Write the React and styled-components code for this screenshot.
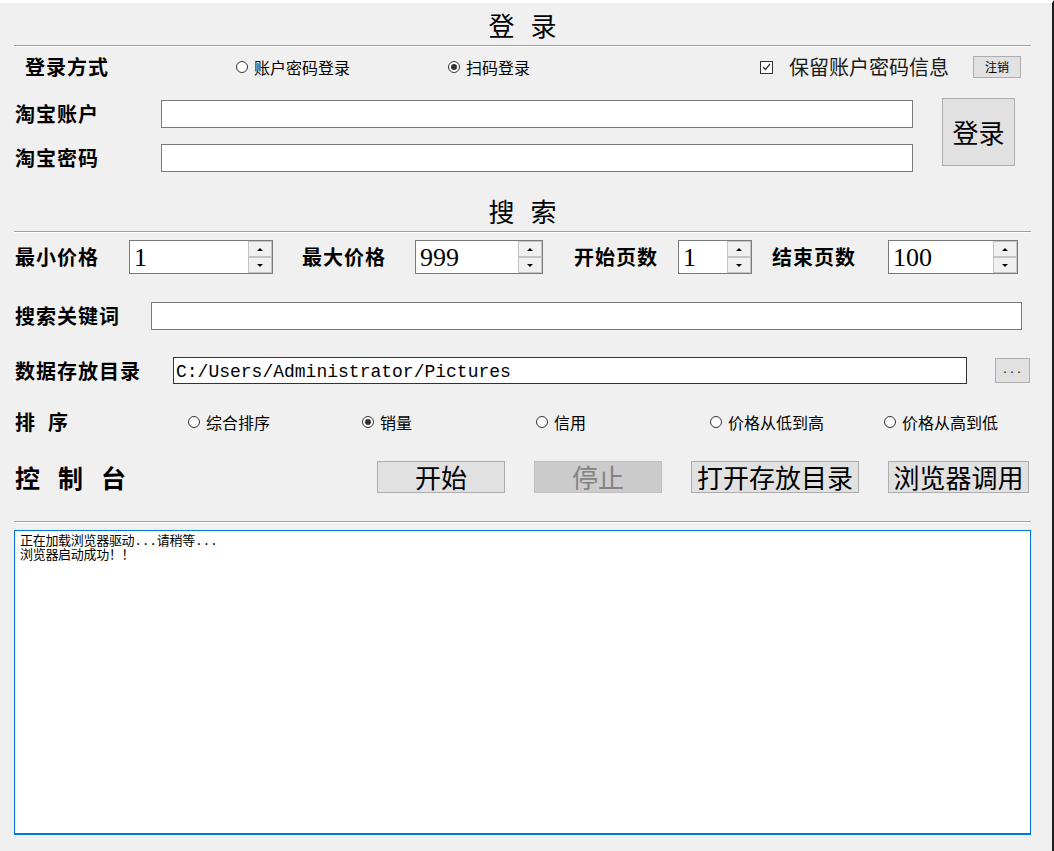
import React from 'react';
import styled, { createGlobalStyle } from 'styled-components';

const GlobalStyle = createGlobalStyle`
  html, body {
    margin: 0;
    padding: 0;
    background: #f0f0f0;
  }
  body {
    font-family: "Noto Sans CJK SC", "Liberation Sans", sans-serif;
    color: #000;
  }
`;

const Window = styled.div`
  width: 1054px;
  height: 851px;
  box-sizing: border-box;
  border-top: 3px solid #fff;
  border-right: 2px solid #1e1e1e;
  background: #f0f0f0;
  padding: 0 21px 0 14px;
  display: flex;
  flex-direction: column;
  overflow: hidden;
`;

const Title = styled.h2`
  margin: ${p => p.$top || 0}px 0 0;
  height: 42px;
  box-sizing: border-box;
  padding: 2px 0 0 16px;
  display: flex;
  align-items: center;
  justify-content: center;
  font-size: 26px;
  font-weight: 400;
  letter-spacing: 16px;
  line-height: 1;
`;

const Divider = styled.div`
  margin-top: ${p => p.$top || 0}px;
  border-top: 1px solid #a0a0a0;
  border-bottom: 1px solid #fff;
`;

const Label = styled.div`
  width: ${p => (p.$w ? `${p.$w}px` : 'auto')};
  flex: none;
  font-size: ${p => p.$fs || 20}px;
  font-weight: 700;
  letter-spacing: ${p => p.$ls ?? 1}px;
  line-height: 1;
  white-space: nowrap;
  padding-left: ${p => p.$pl ?? 1}px;
  box-sizing: border-box;
`;

// 登录方式 行
const ModeRow = styled.div`
  display: grid;
  grid-template-columns: 222px 212px 312px 213px 48px;
  align-items: center;
  height: 40px;
`;

const Option = styled.label`
  display: inline-flex;
  align-items: center;
  gap: 6px;
  font-size: 16px;
  line-height: 1;
  white-space: nowrap;
`;

const Dot = styled.span`
  width: 12px;
  height: 12px;
  box-sizing: border-box;
  border: 1px solid #333;
  border-radius: 50%;
  background: #fff;
  display: grid;
  place-items: center;
  &::after {
    content: '';
    width: 6px;
    height: 6px;
    border-radius: 50%;
    background: ${p => (p.$on ? '#333' : 'transparent')};
  }
`;

const CheckWrap = styled.label`
  display: inline-flex;
  align-items: center;
  gap: 16px;
  font-size: 20px;
  color: #1a1a1a;
  line-height: 1;
  white-space: nowrap;
`;

const Box = styled.span`
  width: 13px;
  height: 13px;
  box-sizing: border-box;
  border: 1px solid #333;
  background: #fff;
  display: grid;
  place-items: center;
`;

const Button = styled.button`
  width: ${p => p.$w}px;
  height: ${p => p.$h}px;
  margin-left: ${p => p.$ml || 0}px;
  flex: none;
  box-sizing: border-box;
  padding: 0;
  border: 1px solid ${p => (p.disabled ? '#bfbfbf' : '#adadad')};
  background: ${p => (p.disabled ? '#cccccc' : '#e1e1e1')};
  color: ${p => (p.disabled ? '#838383' : '#000')};
  font-family: ${p => p.$mono ? '"Liberation Mono", monospace' : '"Noto Sans CJK SC", sans-serif'};
  font-size: ${p => p.$fs}px;
  letter-spacing: ${p => p.$ls || 0}px;
  line-height: 1;
  white-space: nowrap;
  display: flex;
  align-items: center;
  justify-content: center;
`;

// 淘宝账户 / 密码
const LoginBlock = styled.div`
  display: flex;
  margin-top: 11px;
`;

const FieldCol = styled.div`
  display: flex;
  flex-direction: column;
  gap: 16px;
  padding-top: 2px;
`;

const FieldRow = styled.div`
  display: grid;
  grid-template-columns: ${p => p.$cols};
  align-items: center;
  margin-top: ${p => p.$top || 0}px;
`;

const TextBox = styled.div`
  height: ${p => p.$h || 28}px;
  box-sizing: border-box;
  border: 1px solid ${p => p.$dark ? '#333' : '#7a7a7a'};
  background: #fff;
  font-family: "Liberation Mono", monospace;
  font-size: 18px;
  line-height: ${p => (p.$h || 28) - 2}px;
  padding: 2px 0 0 2px;
  white-space: nowrap;
  overflow: hidden;
`;

// 价格 / 页数
const SpinRow = styled.div`
  display: flex;
  align-items: center;
  margin-top: 7px;
  height: 34px;
`;

const SpinBox = styled.div`
  width: ${p => p.$w}px;
  margin-right: ${p => p.$mr || 0}px;
  flex: none;
  height: 34px;
  box-sizing: border-box;
  border: 1px solid #7a7a7a;
  background: #fff;
  display: flex;
`;

const SpinValue = styled.div`
  flex: 1;
  padding-left: 4px;
  font-family: "Liberation Serif", serif;
  font-size: 26px;
  line-height: 33px;
`;

const SpinButtons = styled.div`
  width: 24px;
  display: flex;
  flex-direction: column;
`;

const SpinBtn = styled.div`
  flex: 1;
  box-sizing: border-box;
  border: 1px solid #c4c4c4;
  background: #f0f0f0;
  display: grid;
  place-items: center;
  &::after {
    content: '';
    border-left: 3px solid transparent;
    border-right: 3px solid transparent;
    ${p => (p.$down ? 'border-top: 3px solid #000;' : 'border-bottom: 3px solid #000;')}
  }
`;

const SortRow = styled.div`
  display: grid;
  grid-template-columns: repeat(6, 174px);
  align-items: center;
  height: 24px;
  margin-top: 26px;
`;

const ControlRow = styled.div`
  display: flex;
  align-items: center;
  margin-top: 27px;
  height: 32px;
`;

const ButtonGroup = styled.div`
  display: flex;
  gap: 29px;
`;

const LogArea = styled.div`
  margin-top: 7px;
  height: 305px;
  box-sizing: border-box;
  border: 1px solid #0078d7;
  border-bottom-width: 2px;
  background: #fff;
  padding: 4px 5px;
  font-family: "Liberation Mono", "Noto Sans CJK SC", monospace;
  font-size: 13px;
  letter-spacing: -0.3px;
  line-height: 14px;
  white-space: pre;
`;

const Spin = ({ value, w, mr }) => (
  <SpinBox $w={w} $mr={mr}>
    <SpinValue>{value}</SpinValue>
    <SpinButtons>
      <SpinBtn />
      <SpinBtn $down />
    </SpinButtons>
  </SpinBox>
);

const Radio = ({ label, on }) => (
  <Option>
    <Dot $on={on} />
    {label}
  </Option>
);

const spins = [
  { label: '最小价格', lw: 115, value: '1', w: 144, mr: 28 },
  { label: '最大价格', lw: 114, value: '999', w: 128, mr: 30 },
  { label: '开始页数', lw: 105, value: '1', w: 74, mr: 19 },
  { label: '结束页数', lw: 117, value: '100', w: 130, mr: 0 },
];

const sortOptions = ['综合排序', '销量', '信用', '价格从低到高', '价格从高到低'];

const App = () => {
  return (
    <>
      <GlobalStyle />
      <Window>
        <Title>登录</Title>
        <Divider />

        <ModeRow>
          <Label $pl={11}>登录方式</Label>
          <Radio label="账户密码登录" />
          <Radio label="扫码登录" on />
          <CheckWrap>
            <Box>
              <svg width="9" height="8" viewBox="0 0 9 8">
                <path d="M1 4 L3.5 6.5 L8 1" fill="none" stroke="#333" strokeWidth="1.2" />
              </svg>
            </Box>
            保留账户密码信息
          </CheckWrap>
          <Button $w={48} $h={22} $fs={12}>注销</Button>
        </ModeRow>

        <LoginBlock>
          <FieldCol>
            <FieldRow $cols="147px 752px">
              <Label>淘宝账户</Label>
              <TextBox />
            </FieldRow>
            <FieldRow $cols="147px 752px">
              <Label>淘宝密码</Label>
              <TextBox />
            </FieldRow>
          </FieldCol>
          <Button $w={73} $h={68} $fs={26} $ml={29}>登录</Button>
        </LoginBlock>

        <Title $top={17}>搜索</Title>
        <Divider />

        <SpinRow>
          {spins.map(s => (
            <React.Fragment key={s.label}>
              <Label $w={s.lw}>{s.label}</Label>
              <Spin value={s.value} w={s.w} mr={s.mr} />
            </React.Fragment>
          ))}
        </SpinRow>

        <FieldRow $cols="137px 871px" $top={28}>
          <Label>搜索关键词</Label>
          <TextBox />
        </FieldRow>

        <FieldRow $cols="159px 794px 63px" $top={27}>
          <Label>数据存放目录</Label>
          <TextBox $h={27} $dark>C:/Users/Administrator/Pictures</TextBox>
          <Button $w={35} $h={25} $fs={10} $ml={28} $ls={1} $mono>...</Button>
        </FieldRow>

        <SortRow>
          <Label $ls={13}>排序</Label>
          {sortOptions.map((o, i) => (
            <Radio key={o} label={o} on={i === 1} />
          ))}
        </SortRow>

        <ControlRow>
          <Label $w={363} $fs={25} $ls={18}>控制台</Label>
          <ButtonGroup>
            <Button $w={128} $h={32} $fs={26}>开始</Button>
            <Button $w={128} $h={32} $fs={26} disabled>停止</Button>
            <Button $w={168} $h={32} $fs={26}>打开存放目录</Button>
            <Button $w={141} $h={32} $fs={26}>浏览器调用</Button>
          </ButtonGroup>
        </ControlRow>

        <Divider $top={28} />

        <LogArea>{'正在加载浏览器驱动...请稍等...\n浏览器启动成功！！'}</LogArea>
      </Window>
    </>
  );
};

export default App;
